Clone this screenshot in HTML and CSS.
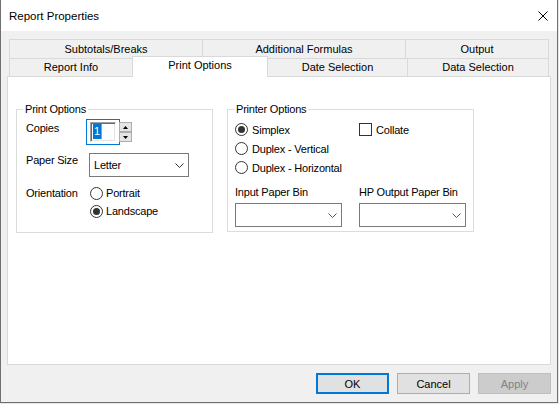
FILE: index.html
```html
<!DOCTYPE html>
<html lang="en">
<head>
   <meta charset="UTF-8">
   <meta name="viewport" content="width=device-width, initial-scale=1.0">
   <title>Report Properties</title>
   <link rel="stylesheet" href="styles.css">
</head>
<body>
   <!-- Dialog window -->
   <div class="window">
       <!-- Title bar -->
       <div class="titlebar">
           <span class="title">Report Properties</span>
           <svg class="close" width="10" height="10" viewBox="0 0 10 10">
               <path d="M0.5 0.5L9.5 9.5M9.5 0.5L0.5 9.5" stroke="#000" stroke-width="1" fill="none"/>
           </svg>
       </div>

       <div class="client">
           <!-- Tab strip, two rows -->
           <div class="tabs">
               <div class="tab-row back">
                   <div class="tab w-subtotals">Subtotals/Breaks</div>
                   <div class="tab w-formulas">Additional Formulas</div>
                   <div class="tab w-output">Output</div>
               </div>
               <div class="tab-row front">
                   <div class="tab w-info">Report Info</div>
                   <div class="tab w-print selected">Print Options</div>
                   <div class="tab w-date">Date Selection</div>
                   <div class="tab w-data">Data Selection</div>
               </div>
           </div>

           <!-- Tab page -->
           <div class="panel">
               <fieldset class="group group-print">
                   <legend>Print Options</legend>
                   <div class="print-grid">
                       <div class="lbl lbl-copies">Copies</div>
                       <div class="spinner">
                           <div class="spin-edit">
                               <div class="sunken"><span class="sel">1</span></div>
                           </div>
                           <div class="spin-btns">
                               <div class="spin-btn">
                                   <svg width="5" height="3" viewBox="0 0 5 3"><path d="M0 3L2.5 0L5 3z" fill="#000"/></svg>
                               </div>
                               <div class="spin-btn">
                                   <svg width="5" height="3" viewBox="0 0 5 3"><path d="M0 0L2.5 3L5 0z" fill="#000"/></svg>
                               </div>
                           </div>
                       </div>

                       <div class="lbl lbl-size">Paper Size</div>
                       <div class="combo combo-size">
                           <span>Letter</span>
                           <svg width="9" height="5" viewBox="0 0 9 5"><path d="M0.5 0.5L4.5 4.5L8.5 0.5" stroke="#333" fill="none"/></svg>
                       </div>

                       <div class="lbl lbl-orient">Orientation</div>
                       <div class="radio-list orient">
                           <div class="option"><span class="radio"></span>Portrait</div>
                           <div class="option"><span class="radio on"></span>Landscape</div>
                       </div>
                   </div>
               </fieldset>

               <fieldset class="group group-printer">
                   <legend>Printer Options</legend>
                   <div class="printer-grid">
                       <div class="option row"><span class="radio on"></span>Simplex</div>
                       <div class="option row check-opt"><span class="check"></span>Collate</div>
                       <div class="option row"><span class="radio"></span>Duplex - Vertical</div>
                       <div></div>
                       <div class="option row"><span class="radio"></span>Duplex - Horizontal</div>
                       <div></div>
                       <div class="lbl bin-label">Input Paper Bin</div>
                       <div class="lbl bin-label">HP Output Paper Bin</div>
                       <div class="combo combo-bin">
                           <span></span>
                           <svg width="9" height="5" viewBox="0 0 9 5"><path d="M0.5 0.5L4.5 4.5L8.5 0.5" stroke="#555" fill="none"/></svg>
                       </div>
                       <div class="combo combo-bin">
                           <span></span>
                           <svg width="9" height="5" viewBox="0 0 9 5"><path d="M0.5 0.5L4.5 4.5L8.5 0.5" stroke="#555" fill="none"/></svg>
                       </div>
                   </div>
               </fieldset>
           </div>

           <!-- Dialog buttons -->
           <div class="buttons">
               <button class="btn default">OK</button>
               <button class="btn">Cancel</button>
               <button class="btn disabled">Apply</button>
           </div>
       </div>
   </div>
</body>
</html>
```

FILE: styles.css
```css
/* basic reset */
* {
    box-sizing: border-box;
}

body {
    margin: 0;
    background-color: #e6e6e6;
    font-family: 'Liberation Sans', Arial, sans-serif;
    font-size: 11px;
    color: #000;
}

/* dialog frame */
.window {
    width: 558px;
    height: 403px;
    border: 1px solid #707070;
    border-top: none;
    display: flex;
    flex-direction: column;
    background-color: #f0f0f0;
}

.titlebar {
    height: 31px;
    flex: none;
    background-color: #fff;
    display: flex;
    align-items: center;
    justify-content: space-between;
    padding: 0 9px 0 8px;
}

.title {
    font-size: 11.5px;
}

.client {
    flex: 1;
    padding: 8px 6px;
    display: flex;
    flex-direction: column;
}

/* tab strip */
.tabs {
    margin-left: 2px;
}

.tab-row {
    display: flex;
}

.tab {
    border: 1px solid #d9d9d9;
    border-bottom: none;
    background-color: #f0f0f0;
    text-align: center;
    line-height: 13px;
    margin-left: -1px;
    white-space: nowrap;
}

.tab:first-child {
    margin-left: 0;
}

.back .tab {
    height: 19px;
    padding-top: 3px;
}

.front {
    height: 18px;
    align-items: flex-start;
}

.front .tab {
    height: 18px;
    padding-top: 2px;
}

.front .tab.selected {
    background-color: #fff;
    height: 21px;
    margin-top: -2px;
    padding-top: 2px;
    position: relative;
    z-index: 1;
}

.w-subtotals { width: 194px; }
.w-formulas { width: 204px; }
.w-output { width: 144px; }
.w-info { width: 124px; }
.w-print { width: 136px; }
.w-date { width: 141px; }
.w-data { width: 142px; }

/* tab page */
.panel {
    height: 289px;
    flex: none;
    background-color: #fff;
    border: 1px solid #d9d9d9;
    padding: 26px 0 0 8px;
    display: flex;
    align-items: flex-start;
    gap: 14px;
    letter-spacing: -0.2px;
}

.group {
    margin: 0;
    padding: 0;
    min-width: 0;
    border: 1px solid #dcdcdc;
}

.group legend {
    margin-left: 6px;
    padding: 0 2px;
    line-height: 13px;
}

.group-print {
    width: 197px;
}

.group-printer {
    width: 247px;
}

.lbl {
    line-height: 13px;
    white-space: nowrap;
}

/* print options group */
.print-grid {
    display: grid;
    grid-template-columns: 60px auto;
    grid-template-rows: 26px 24px 36px;
    row-gap: 8px;
    padding: 3px 0 11px 9px;
}

.lbl-copies { padding-top: 3px; }
.lbl-size { padding-top: 1px; }
.lbl-orient { padding-top: 2px; }

.spinner {
    display: flex;
    align-items: flex-start;
}

.spin-edit {
    width: 34px;
    height: 26px;
    border: 1px solid #0078d7;
    background-color: #fff;
    padding: 2px 0 0 3px;
}

.sunken {
    width: 26px;
    height: 20px;
    border: 1px solid;
    border-color: #a0a0a0 #fff #fff #a0a0a0;
    box-shadow: inset 1px 1px 0 #696969, inset -1px -1px 0 #e3e3e3;
    padding: 1px 0 0 2px;
}

.sel {
    display: inline-block;
    height: 15px;
    line-height: 15px;
    padding: 0 1px;
    background-color: #0078d7;
    color: #fff;
    border-right: 1px solid #f08a24;
}

.spin-btns {
    margin-left: -1px;
    margin-top: 3px;
    width: 13px;
    display: flex;
    flex-direction: column;
}

.spin-btn {
    height: 10px;
    border: 1px solid #adadad;
    background-color: #e5e5e5;
    display: flex;
    align-items: center;
    justify-content: center;
}

.combo {
    height: 24px;
    border: 1px solid #7a7a7a;
    background-color: #fff;
    display: flex;
    align-items: center;
    justify-content: space-between;
    padding: 0 4px 0 4px;
}

.combo-size {
    width: 100px;
    margin-left: 3px;
}

.orient {
    margin-left: 4px;
    margin-top: -1px;
}

/* radios and checkbox */
.option {
    display: flex;
    align-items: center;
    height: 18px;
    gap: 3px;
    white-space: nowrap;
}

.radio {
    width: 13px;
    height: 13px;
    border: 1px solid #333;
    border-radius: 50%;
    background-color: #fff;
    display: flex;
    align-items: center;
    justify-content: center;
}

.radio.on::after {
    content: '';
    width: 7px;
    height: 7px;
    border-radius: 50%;
    background-color: #333;
}

.check {
    width: 13px;
    height: 13px;
    border: 1px solid #333;
    background-color: #fff;
}

/* printer options group */
.printer-grid {
    display: grid;
    grid-template-columns: 124px auto;
    padding: 4px 0 4px 7px;
}

.printer-grid .row {
    height: 19px;
    gap: 4px;
}

.check-opt {
    gap: 2px;
}

.bin-label {
    margin-top: 9px;
}

.combo-bin {
    width: 107px;
    margin-top: 4px;
}

/* dialog buttons */
.buttons {
    margin-top: 8px;
    display: flex;
    justify-content: flex-end;
    gap: 8px;
}

.btn {
    width: 73px;
    height: 21px;
    padding: 0;
    font-family: 'Liberation Sans', Arial, sans-serif;
    font-size: 11px;
    color: #000;
    background-color: #e1e1e1;
    border: 1px solid #adadad;
}

.btn.default {
    border: 2px solid #0078d7;
}

.btn.disabled {
    background-color: #cccccc;
    border-color: #bfbfbf;
    color: #838383;
}
```
